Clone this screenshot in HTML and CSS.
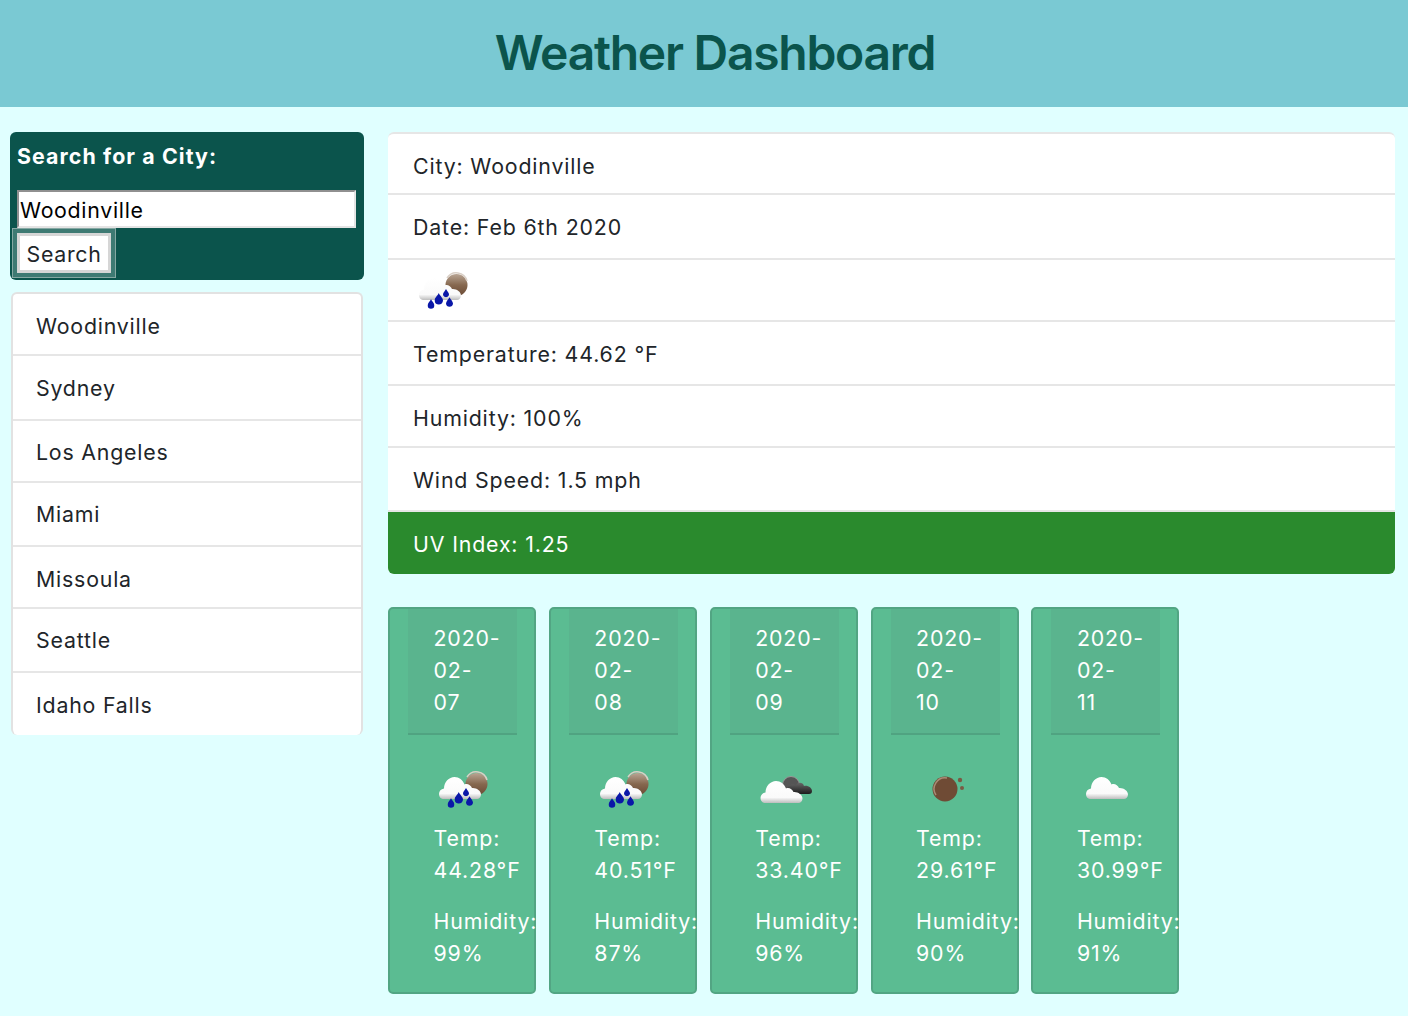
FILE: index.html
```html
<!DOCTYPE html>
<html lang="en">
<head>
    <meta charset="UTF-8">
    <meta name="viewport" content="width=device-width, initial-scale=1.0">
    <title>Weather Dashboard</title>
    <link rel="stylesheet" href="styles.css">
</head>
<body>

    <svg class="icon-defs" width="0" height="0">
        <defs>
            <linearGradient id="cloudFill" x1="0" y1="0" x2="0" y2="1">
                <stop offset="0" stop-color="#ffffff"/>
                <stop offset="0.75" stop-color="#fafafa"/>
                <stop offset="1" stop-color="#bdbdbd"/>
            </linearGradient>
            <linearGradient id="darkFill" x1="0" y1="0" x2="0" y2="1">
                <stop offset="0" stop-color="#666"/>
                <stop offset="1" stop-color="#1c1c1c"/>
            </linearGradient>
            <linearGradient id="brownFill" x1="0" y1="0" x2="0" y2="1">
                <stop offset="0" stop-color="#b9a594"/>
                <stop offset="0.5" stop-color="#86684f"/>
                <stop offset="1" stop-color="#6b4a35"/>
            </linearGradient>
            <symbol id="cloudShape" viewBox="0 0 42 24">
                <path d="M5 24C2 24 0 22 0 19C0 16 2 14 5 13.500C5 7 10 2 15.500 2C20 2 24 5 25.500 9.500C28 8 32 10 33 13C37 12.500 42 15.500 42 19.500C42 22 40 24 38 24Z" fill="url(#cloudFill)"/>
            </symbol>
            <symbol id="drop" viewBox="0 0 8 11">
                <path d="M4 0C5 2.500 8 4.500 8 7.200C8 9.400 6.200 11 4 11C1.800 11 0 9.400 0 7.200C0 4.500 3 2.500 4 0Z" fill="#0a17a8"/>
            </symbol>
            <symbol id="iconRain" viewBox="0 0 60 44">
                <circle cx="39.500" cy="17" r="11" fill="url(#brownFill)"/>
                <path d="M30 10A11 11 0 0 1 50 13" fill="none" stroke="#d9cfc6" stroke-width="1.500"/>
                <use href="#cloudShape" x="2" y="8" width="42" height="24"/>
                <use href="#drop" x="10.500" y="31" width="7" height="10"/>
                <use href="#drop" x="17.500" y="24.500" width="8.500" height="12.500"/>
                <use href="#drop" x="26" y="20.500" width="6" height="9"/>
                <use href="#drop" x="29" y="29" width="7" height="10"/>
            </symbol>
            <symbol id="iconNight" viewBox="0 0 60 44">
                <circle cx="32" cy="18" r="8.500" fill="#555" stroke="#999" stroke-width="1"/>
                <path d="M30 27C28 27 27 25 28 22C30 17 34 17 37 18C39 15 44 15 45 19C49 18 53 21 53 24C53 26 52 27 50 27Z" fill="url(#darkFill)"/>
                <use href="#cloudShape" x="1" y="12" width="43" height="24"/>
            </symbol>
            <symbol id="iconDust" viewBox="0 0 60 44">
                <circle cx="25" cy="22" r="12.500" fill="#6f4b35"/>
                <path d="M16 28A11 11 0 0 1 27 11" fill="none" stroke="#a98b75" stroke-width="1.500"/>
                <circle cx="40" cy="13" r="2.200" fill="#7a5a44"/>
                <circle cx="42" cy="21" r="2" fill="#7a5a44"/>
            </symbol>
            <symbol id="iconCloud" viewBox="0 0 60 44">
                <use href="#cloudShape" x="6" y="8" width="42" height="24"/>
            </symbol>
        </defs>
    </svg>

    <header class="page-header">
        <h1>Weather Dashboard</h1>
    </header>

    <main class="layout">
        <aside class="sidebar">
            <form class="search-panel">
                <label class="search-label" for="city">Search for a City:</label>
                <input class="search-input" type="text" id="city" value="Woodinville">
                <button class="search-btn" type="button">Search</button>
            </form>

            <ul class="list city-list">
                <li>Woodinville</li>
                <li>Sydney</li>
                <li>Los Angeles</li>
                <li>Miami</li>
                <li>Missoula</li>
                <li>Seattle</li>
                <li>Idaho Falls</li>
            </ul>
        </aside>

        <section class="content">
            <ul class="list current">
                <li>City: Woodinville</li>
                <li>Date: Feb 6th 2020</li>
                <li><svg class="weather-icon"><use href="#iconRain"/></svg></li>
                <li>Temperature: 44.62 °F</li>
                <li>Humidity: 100%</li>
                <li>Wind Speed: 1.5 mph</li>
                <li class="uv">UV Index: 1.25</li>
            </ul>

            <div class="forecast">
                <article class="card">
                    <h2 class="card-date">2020-02-07</h2>
                    <svg class="weather-icon"><use href="#iconRain"/></svg>
                    <p>Temp: 44.28°F</p>
                    <p>Humidity: 99%</p>
                </article>
                <article class="card">
                    <h2 class="card-date">2020-02-08</h2>
                    <svg class="weather-icon"><use href="#iconRain"/></svg>
                    <p>Temp: 40.51°F</p>
                    <p>Humidity: 87%</p>
                </article>
                <article class="card">
                    <h2 class="card-date">2020-02-09</h2>
                    <svg class="weather-icon"><use href="#iconNight"/></svg>
                    <p>Temp: 33.40°F</p>
                    <p>Humidity: 96%</p>
                </article>
                <article class="card">
                    <h2 class="card-date">2020-02-10</h2>
                    <svg class="weather-icon"><use href="#iconDust"/></svg>
                    <p>Temp: 29.61°F</p>
                    <p>Humidity: 90%</p>
                </article>
                <article class="card">
                    <h2 class="card-date">2020-02-11</h2>
                    <svg class="weather-icon"><use href="#iconCloud"/></svg>
                    <p>Temp: 30.99°F</p>
                    <p>Humidity: 91%</p>
                </article>
            </div>
        </section>
    </main>

</body>
</html>
```

FILE: styles.css
```css
* {
    box-sizing: border-box;
}
html, body {
    height: 1016px;
    overflow: hidden;
}
body {
    margin: 0;
    background-color: #e0ffff;
    font-family: Inter, "Liberation Sans", sans-serif;
    font-size: 21.33px;
    line-height: 32px;
    letter-spacing: 0.85px;
    color: #212529;
}
.icon-defs {
    position: absolute;
}
.page-header {
    height: 107px;
    padding-left: 22px;
    display: flex;
    align-items: center;
    justify-content: center;
    background-color: #7ac9d3;
}
.page-header h1 {
    margin: 0 0 1px;
    font-size: 48px;
    line-height: 58px;
    font-weight: 600;
    color: #0b544c;
    letter-spacing: -1.280px;
}
.layout {
    display: flex;
    gap: 24px;
    padding: 25px 13px 0 10px;
}
.sidebar {
    width: 354px;
    flex: none;
}
.search-panel {
    height: 148px;
    padding: 7px;
    background-color: #0b544c;
    border-radius: 6px;
    display: flex;
    flex-direction: column;
    align-items: flex-start;
}
.search-label {
    height: 52px;
    padding-top: 1px;
    color: white;
    font-weight: 700;
    letter-spacing: 1.1px;
}
.search-input {
    width: 339px;
    height: 39px;
    padding: 2px 1px 0;
    border: 2px inset #e4e4e4;
    background-color: white;
    color: black;
    font: inherit;
    letter-spacing: 0.7px;
}
.search-btn {
    width: 94px;
    height: 41px;
    margin-top: 5px;
    padding: 2px 0 0;
    border: 3px solid #d6d6d6;
    box-shadow: 0 0 0 4px #3e7a73, 0 0 0 5px #86a8a3;
    background-color: white;
    color: #212529;
    font: inherit;
    letter-spacing: 0.7px;
}
.list {
    margin: 0;
    padding: 0;
    list-style: none;
    display: grid;
    background-color: white;
    border-radius: 6px;
    overflow: hidden;
}
.list li {
    display: flex;
    align-items: center;
    padding: 0 25px;
    border-bottom: 2px solid #e6e6e6;
}
.list li:last-child {
    border-bottom: none;
}
.city-list {
    margin: 12px 1px 0;
    grid-template-rows: 62px 65px 62px 64px 62px 64px 62px;
    border: 2px solid #e2e2e2;
    border-bottom: none;
    letter-spacing: 0.8px;
}
.city-list li {
    padding-left: 23px;
}
.city-list li:nth-child(1), .city-list li:nth-child(5) {
    padding-top: 4px;
}
.city-list li:nth-child(3), .city-list li:nth-child(7) {
    padding-top: 2px;
}
.content {
    width: 1007px;
    flex: none;
}
.current {
    grid-template-rows: 61px 65px 62px 64px 62px 64px 62px;
    border-top: 2px solid #e6e6e6;
}
.current li:nth-child(1), .current li:nth-child(5) {
    padding-top: 4px;
}
.current li:nth-child(4), .current li:nth-child(6), .current li:nth-child(7) {
    padding-top: 2px;
}
.current .weather-icon {
    margin-left: 4px;
}
.current .uv {
    background-color: #2a8a2d;
    color: white;
}
.forecast {
    display: flex;
    gap: 12.850px;
    margin-top: 33px;
}
.card {
    width: 148px;
    height: 387px;
    flex: none;
    padding: 0 0 0 18px;
    background-color: #5bbc92;
    border: 2px solid #52a583;
    border-radius: 5px;
    color: white;
}
.card-date {
    width: 109px;
    height: 126px;
    margin: 0;
    padding: 13px 29px 0 25.500px;
    font-size: inherit;
    font-weight: 400;
    background-color: #5ab48e;
    border-bottom: 2px solid #50a381;
    line-height: 32px;
}
.card .weather-icon {
    display: block;
    margin: 32px 0 0 29px;
}
.card p {
    width: 120px;
    margin: 19px 0 0 25.500px;
}
.card .weather-icon + p {
    margin-top: 11px;
}
.weather-icon {
    width: 60px;
    height: 44px;
}
```
